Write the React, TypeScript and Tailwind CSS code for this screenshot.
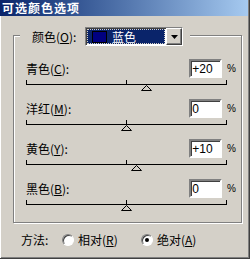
const rows = [
  { name: '青色', key: 'C', value: '+20', pos: 20 },
  { name: '洋红', key: 'M', value: '0', pos: 0 },
  { name: '黄色', key: 'Y', value: '+10', pos: 10 },
  { name: '黑色', key: 'B', value: '0', pos: 0 },
]

const font = "font-['Noto_Sans_CJK_SC','Liberation_Sans',sans-serif]"

function Radio({ checked }: { checked?: boolean }) {
  return (
    <span className="relative inline-flex h-[12px] w-[12px] items-center justify-center rounded-full border border-t-[#808080] border-l-[#808080] border-b-white border-r-white bg-white shadow-[inset_1px_1px_0_#404040]">
      {checked && <span className="h-[4px] w-[4px] rounded-full bg-black" />}
    </span>
  )
}

export default function App() {
  return (
    <div className={`${font} relative h-[259px] w-[250px] overflow-hidden bg-[#d4d0c8] text-[12px] leading-[16px] text-black border-r border-b border-[#404040] shadow-[inset_1px_0_0_#fff,inset_-1px_-1px_0_#808080]`}>
      {/* Title bar */}
      <div className="flex h-[16px] w-[248px] items-center bg-linear-to-r from-[#0a246a] to-[#a6caf0] pl-[2px]">
        <span className="text-[12px] font-bold leading-[16px] tracking-[1px] text-white">可选颜色选项</span>
      </div>

      {/* Group box */}
      <div className="ml-[13px] mt-[19px] flex h-[188px] w-[229px] flex-col border border-[#808080] shadow-[inset_1px_1px_0_#fff,1px_1px_0_#fff]">
        {/* Legend: colour combo */}
        <div className="-mt-[9px] ml-[6px] flex h-[19px] items-center self-start bg-[#d4d0c8] pl-[12px] pr-[7px]">
          <span className="w-[53px]">
            颜色(<u>O</u>):
          </span>
          <div className="flex h-[19px] w-[98px] border border-t-[#808080] border-l-[#808080] border-b-white border-r-white shadow-[inset_1px_1px_0_#404040] bg-white">
            <div className="m-[1px] flex flex-1 items-center border border-dotted border-[#d4d0c8] bg-[#0a246a] pl-[4px]">
              <span className="h-[12px] w-[15px] border border-black bg-[#000080]" />
              <span className="ml-[5px] text-white">蓝色</span>
            </div>
            <div className="flex w-[16px] items-center justify-center border border-t-white border-l-white border-b-[#404040] border-r-[#404040] bg-[#d4d0c8] shadow-[inset_-1px_-1px_0_#808080]">
              <svg width="7" height="4" viewBox="0 0 7 4">
                <path d="M0 0h7L3.5 4z" fill="#000" />
              </svg>
            </div>
          </div>
        </div>

        {/* Sliders */}
        <div className="ml-[12px] mt-[13px] flex w-[210px] flex-col">
          {rows.map((r) => (
            <div key={r.key} className="flex flex-col">
              <div className="flex h-[19px] items-center">
                <span className="w-[164px]">
                  {r.name}(<u>{r.key}</u>):
                </span>
                <div className="flex h-[19px] w-[33px] items-center border-2 border-t-[#808080] border-l-[#808080] border-b-white border-r-white bg-white pl-[1px] font-['Liberation_Sans',sans-serif] text-[12px] shadow-[inset_1px_1px_0_#404040]">
                  {r.value}
                </div>
                <span className="ml-[5px] font-['Liberation_Sans',sans-serif] text-[10px]">%</span>
              </div>
              <div className="relative h-[21px] w-[201px]">
                <div className="absolute left-0 top-[6px] h-px w-full bg-black" />
                <div className="absolute left-0 top-[2px] h-[4px] w-px bg-black" />
                <div className="absolute left-[100px] top-[2px] h-[4px] w-px bg-black" />
                <div className="absolute left-[200px] top-[2px] h-[4px] w-px bg-black" />
                <svg
                  className="absolute top-[7px]"
                  style={{ left: 95 + r.pos }}
                  width="11"
                  height="6"
                  viewBox="0 0 11 6"
                >
                  <path d="M5.5 0.5L10.5 5.5H0.5z" fill="#d4d0c8" stroke="#000" strokeWidth="1" />
                </svg>
              </div>
            </div>
          ))}
        </div>
      </div>

      {/* Method */}
      <div className="ml-[21px] mt-[9px] flex h-[16px] items-center">
        <span className="w-[41px]">方法:</span>
        <Radio />
        <span className="ml-[4px] w-[63px]">
          相对(<u>R</u>)
        </span>
        <Radio checked />
        <span className="ml-[4px]">
          绝对(<u>A</u>)
        </span>
      </div>
    </div>
  )
}
